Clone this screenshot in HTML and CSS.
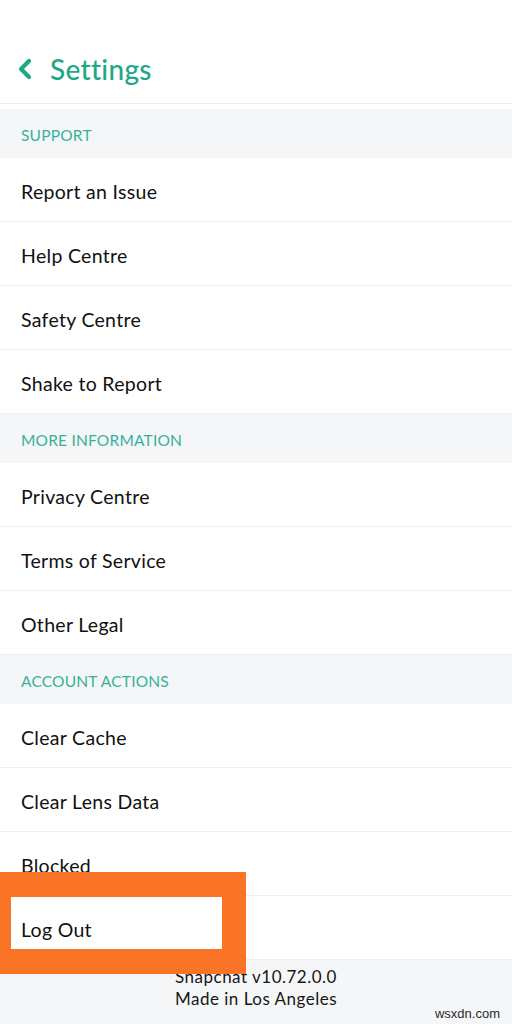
FILE: index.html
```html
<!DOCTYPE html>
<html>
<head>
<meta charset="utf-8">
<link rel="stylesheet" href="styles.css">
</head>
<body>
<div class="screen">
  <header class="topbar">
    <svg class="back" width="16" height="22" viewBox="0 0 16 22"><path d="M12 3 L4 11 L12 19" fill="none" stroke="#1ea886" stroke-width="4.2" stroke-linecap="round" stroke-linejoin="round"/></svg>
    <h1 class="title">Settings</h1>
  </header>
  <div class="list">
    <div class="section">SUPPORT</div>
    <div class="row">Report an Issue</div>
    <div class="row">Help Centre</div>
    <div class="row">Safety Centre</div>
    <div class="row">Shake to Report</div>
    <div class="section">MORE INFORMATION</div>
    <div class="row">Privacy Centre</div>
    <div class="row">Terms of Service</div>
    <div class="row">Other Legal</div>
    <div class="section">ACCOUNT ACTIONS</div>
    <div class="row">Clear Cache</div>
    <div class="row">Clear Lens Data</div>
    <div class="row">Blocked</div>
    <div class="row">Log Out</div>
    <footer class="footer">
      <div>Snapchat v10.72.0.0</div>
      <div>Made in Los Angeles</div>
    </footer>
  </div>
  <div class="highlight"></div>
  <div class="watermark">wsxdn.com</div>
</div>
</body>
</html>
```

FILE: styles.css
```css
html, body {
  margin: 0;
  padding: 0;
  background: #ffffff;
}
.screen {
  position: relative;
  width: 512px;
  height: 1024px;
  overflow: hidden;
  font-family: Lato, "Noto Sans", sans-serif;
  color: #161616;
}
.topbar {
  border-bottom: 1px solid #ececec;
  display: flex;
  align-items: center;
  padding: 34px 0 0 17px;
  box-sizing: border-box;
  height: 104px;
}
.back {
  display: block;
}
.title {
  margin: 0 0 0 17px;
  font-size: 28px;
  font-weight: 500;
  color: #1ea886;
  letter-spacing: 0.3px;
}
.list {
  margin-top: 5px;
}
.section {
  height: 49px;
  padding-top: 2px;
  box-sizing: border-box;
  background: #f5f6f8;
  color: #35b29a;
  font-size: 15.5px;
  display: flex;
  align-items: center;
  padding-left: 21px;
  letter-spacing: 0.2px;
}
.row {
  height: 64px;
  padding-top: 3px;
  box-sizing: border-box;
  border-bottom: 1px solid #efefef;
  display: flex;
  align-items: center;
  padding-left: 21px;
  font-size: 19.5px;
  font-weight: 400;
  color: #111111;
  letter-spacing: 0.3px;
}
.footer {
  height: 64px;
  background: #f5f6f8;
  display: flex;
  flex-direction: column;
  align-items: center;
  justify-content: flex-start;
  font-size: 17px;
  line-height: 22px;
  letter-spacing: 0.5px;
  padding-top: 6px;
  box-sizing: border-box;
}
.highlight {
  position: absolute;
  left: 0;
  top: 872px;
  width: 211px;
  height: 52px;
  border-style: solid;
  border-color: #f97427;
  border-width: 25px 24px 25px 11px;
}
.watermark {
  position: absolute;
  right: 12px;
  bottom: 3px;
  font-family: "Liberation Sans", sans-serif;
  font-size: 13px;
  color: #2a2a2a;
}
```
